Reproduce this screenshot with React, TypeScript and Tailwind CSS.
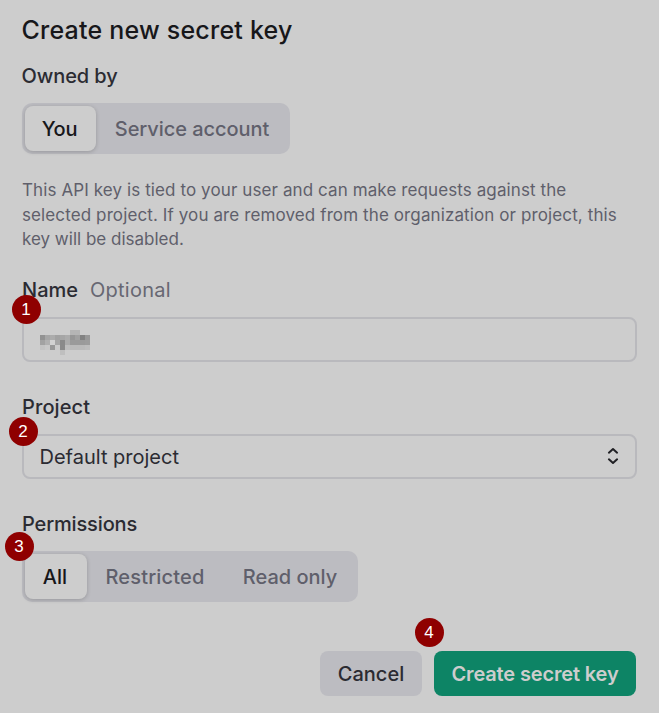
import type { ReactNode } from "react";

function Badge({ n, place }: { n: number; place: string }) {
  return (
    <span
      className={`absolute z-10 flex size-[29px] items-center justify-center rounded-full bg-[#8f0000] pr-px font-['Liberation_Sans',sans-serif] text-[17px] leading-none text-white ${place}`}
    >
      {n}
    </span>
  );
}

function Label({ children, spacing }: { children: ReactNode; spacing: string }) {
  return (
    <div className={`text-[20px] leading-6 font-medium whitespace-nowrap text-[#2b2b32] ${spacing}`}>
      {children}
    </div>
  );
}

type TabProps = { children: ReactNode; active?: boolean; className: string };

function Tab({ children, active, className }: TabProps) {
  return (
    <button
      className={`flex h-[45px] items-center justify-center rounded-[8px] text-[20px] font-medium whitespace-nowrap ${
        active ? "bg-[#cdcdcd] pr-[2px] text-[#17171a] shadow-[0_1px_4px_rgba(0,0,0,0.2)]" : "text-[#5f5f6b]"
      } ${className}`}
    >
      {children}
    </button>
  );
}

// Shades of the censored value; null leaves the field's background visible.
const MOSAIC: (string | null)[][] = [
  [null, null, null, null, null, null, "#b5b5b5", "#b5b5b5", null, null],
  ["#929292", "#a6a6a6", "#acacac", "#a2a2a2", "#a6a6a6", "#acacac", "#969696", "#a0a0a0", "#828282", "#989898"],
  ["#a2a2a2", "#b0b0b0", "#d2d2d2", "#a6a6a6", "#8a8a8a", "#ababab", "#9a9a9a", "#9a9a9a", "#9a9a9a", "#9c9c9c"],
  ["#c3c3c3", "#c8c8c8", "#989898", "#cbcbcb", "#8a8a8a", "#bdbdbd", "#bababa", "#bababa", "#bababa", "#bdbdbd"],
  [null, null, null, null, "#bfbfbf", null, null, null, null, null],
];

export default function App() {
  return (
    <main className="relative h-[713px] w-[659px] overflow-hidden bg-[#cdcdcd] px-[22px] pt-[14px] font-['Inter',sans-serif]">
      <h1 className="-ml-[0.5px] text-[25px] leading-8 font-medium tracking-[0.21px] whitespace-nowrap text-[#17171a]">
        Create new secret key
      </h1>
      <Label spacing="mt-[18px] -ml-[0.5px] tracking-[-0.1px]">Owned by</Label>
      <div className="mt-[15px] flex h-[51px] w-[268px] rounded-[10px] bg-[#bcbcc1] p-[3px]">
        <Tab active className="w-[71px] tracking-[-0.2px]">You</Tab>
        <Tab className="w-[191px] pl-[1px] tracking-[-0.06px]">Service account</Tab>
      </div>
      <p className="mt-6 text-[17px] leading-[24.5px] tracking-[0.1px] whitespace-nowrap text-[#5f5f6b]">
        This API key is tied to your user and can make requests against the
        <br />
        <span className="tracking-[0.11px]">selected project. If you are removed from the organization or project, this</span>
        <br />
        <span className="tracking-[0px]">key will be disabled.</span>
      </p>

      <Label spacing="mt-[26.5px] flex gap-3">
        <span>Name</span>
        <span className="font-normal tracking-[0.25px] text-[#676772]">Optional</span>
      </Label>
      <div className="mt-[15px] h-[45px] w-[615px] rounded-[8px] border-2 border-[#b9b9bd] pt-[11px] pl-[16px]">
        <div className="grid w-[50px] grid-cols-10">
          {MOSAIC.flat().map((shade, i) => (
            <span key={i} className="size-[5px]" style={{ backgroundColor: shade ?? "transparent" }} />
          ))}
        </div>
      </div>

      <Label spacing="mt-[33px] tracking-[0.1px]">Project</Label>
      <div className="mt-[15px] flex h-[45px] w-[615px] items-center justify-between rounded-[8px] border-2 border-[#b9b9bd] px-[16px] text-[20px] text-[#2b2b32]">
        <span className="-ml-[0.5px]">Default project</span>
        <svg className="-mt-px" width="12" height="18" viewBox="0 0 12 18" fill="none" stroke="#202024" strokeWidth="2" strokeLinecap="round" strokeLinejoin="round">
          <path d="M1.9 5.7 6 2.1l4.1 3.6M1.9 12.3 6 15.9l4.1-3.6" />
        </svg>
      </div>

      <Label spacing="mt-[33px] tracking-[-0.15px]">Permissions</Label>
      <div className="mt-[15px] flex h-[51px] w-[336px] rounded-[10px] bg-[#bcbcc1] p-[3px]">
        <Tab active className="w-[62px]">All</Tab>
        <Tab className="w-[136px] tracking-[0.18px]">Restricted</Tab>
        <Tab className="w-[132px] pl-[2px]">Read only</Tab>
      </div>

      <div className="mt-[49px] mr-[1px] flex justify-end gap-3 text-[20px] whitespace-nowrap">
        <button className="h-[45px] w-[102px] rounded-[8px] bg-[#bcbcc1] font-medium text-[#2b2b32]">Cancel</button>
        <button className="h-[45px] w-[202px] rounded-[8px] bg-[#0d8465] font-semibold tracking-[-0.14px] text-[#cdcdcd]">
          Create secret key
        </button>
      </div>

      <Badge n={1} place="top-[295px] left-[12px]" />
      <Badge n={2} place="top-[417px] left-[9px]" />
      <Badge n={3} place="top-[532px] left-[5px]" />
      <Badge n={4} place="top-[618px] left-[415px]" />
    </main>
  );
}
